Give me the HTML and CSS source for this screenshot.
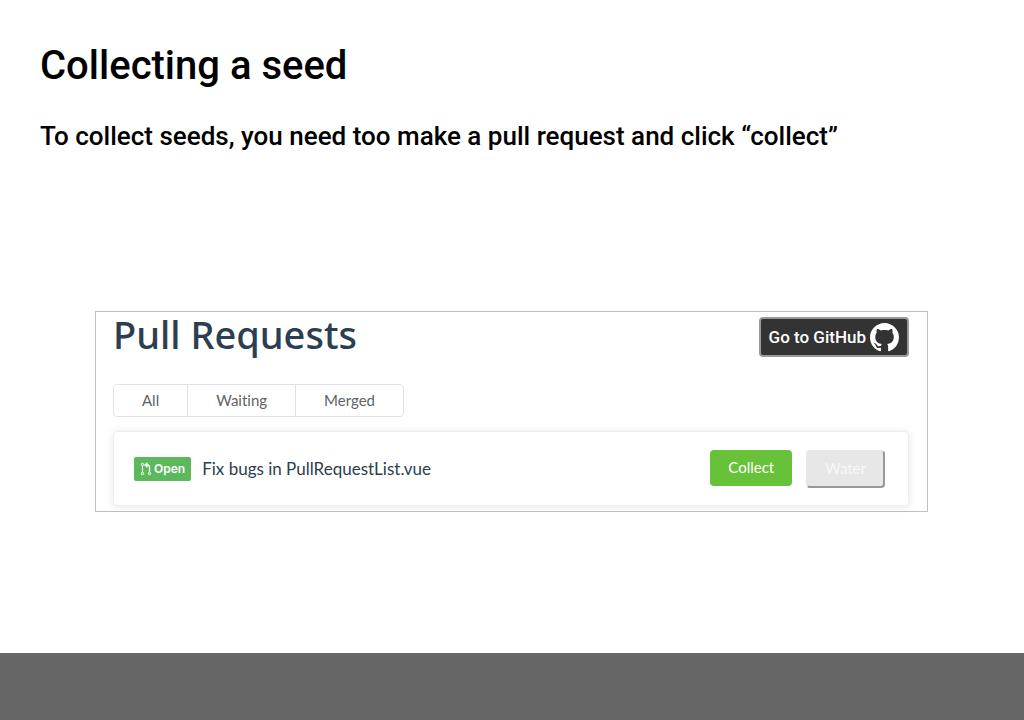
FILE: index.html
```html
<!DOCTYPE html>
<html lang="en">
<head>
<meta charset="utf-8">
<title>Collecting a seed</title>
<link rel="stylesheet" href="styles.css">
</head>
<body>
<main class="slide">
  <h1 class="title">Collecting a seed</h1>
  <p class="lead">To collect seeds, you need too make a pull request and click “collect”</p>
  <section class="panel">
    <header class="panel-head">
      <h2 class="panel-title">Pull Requests</h2>
      <a class="github" href="#">Go to GitHub
        <svg class="github-icon" viewBox="0 0 16 16" aria-hidden="true"><path fill="currentColor" d="M8 0C3.58 0 0 3.58 0 8c0 3.54 2.29 6.53 5.47 7.59.4.07.55-.17.55-.38 0-.19-.01-.82-.01-1.49-2.01.37-2.53-.49-2.69-.94-.09-.23-.48-.94-.82-1.13-.28-.15-.68-.52-.01-.53.63-.01 1.08.58 1.23.82.72 1.21 1.87.87 2.33.66.07-.52.28-.87.51-1.07-1.78-.2-3.64-.89-3.64-3.95 0-.87.31-1.59.82-2.15-.08-.2-.36-1.02.08-2.12 0 0 .67-.21 2.2.82.64-.18 1.32-.27 2-.27s1.36.09 2 .27c1.53-1.04 2.2-.82 2.2-.82.44 1.1.16 1.92.08 2.12.51.56.82 1.27.82 2.15 0 3.07-1.87 3.75-3.65 3.95.29.25.54.73.54 1.48 0 1.07-.01 1.93-.01 2.2 0 .21.15.46.55.38A8.01 8.01 0 0 0 16 8c0-4.42-3.58-8-8-8z"/></svg>
      </a>
    </header>
    <div class="filters">
      <button class="filter" type="button">All</button>
      <button class="filter" type="button">Waiting</button>
      <button class="filter" type="button">Merged</button>
    </div>
    <article class="card">
      <span class="badge">
        <svg class="badge-icon" viewBox="0 0 12 14" aria-hidden="true" fill="none" stroke="currentColor"><circle cx="2.5" cy="2.5" r="1.2"/><circle cx="2.5" cy="11.5" r="1.2"/><circle cx="9.5" cy="11.5" r="1.2"/><path d="M2.5 4v6"/><path stroke-width="1.3" d="M9.5 10V5Q9.5 3 7.5 3H6"/><path fill="currentColor" stroke="none" d="M7.5 0v6L4 3z"/></svg>
        Open
      </span>
      <span class="name">Fix bugs in PullRequestList.vue</span>
      <div class="actions">
        <button class="collect" type="button">Collect</button>
        <button class="water" type="button" disabled>Water</button>
      </div>
    </article>
  </section>
</main>
<footer class="bar"></footer>
</body>
</html>
```
FILE: styles.css
```css
* { box-sizing: border-box; }
body {
  margin: 0;
  min-height: 100vh;
  display: flex;
  flex-direction: column;
  background: #fff;
  color: #000;
  font-family: Roboto, sans-serif;
}
.slide { flex: 1; padding: 40px 40px 0; }
.title { margin: 0; font-size: 40px; line-height: 52px; font-weight: 500; }
.lead { margin: 28px 0 0; font-size: 26px; line-height: 32px; font-weight: 500; }
.panel {
  margin: 159px 56px 0 55px;
  padding: 5px 18px 5px 17px;
  border: 1px solid #c0c0c0;
}
.panel-head { display: flex; justify-content: space-between; align-items: flex-start; }
.panel-title {
  margin: 0;
  font: 500 38px/34px "Noto Sans", sans-serif;
  color: #2c3e50;
}
.github {
  display: flex;
  align-items: center;
  gap: 4px;
  height: 40px;
  padding: 0 8px;
  border: 2px solid #999;
  border-radius: 4px;
  background: #333;
  color: #fff;
  font-size: 17px;
  font-weight: 500;
  text-decoration: none;
}
.github-icon { width: 29px; height: 29px; }
.filters {
  display: inline-flex;
  margin-top: 27px;
  border: 1px solid #e0e2e8;
  border-radius: 4px;
}
.filter {
  height: 31px;
  padding: 0 28px 2px;
  border: 0;
  background: none;
  color: #606266;
  font: 15px Lato, sans-serif;
  font-variant-ligatures: none;
}
.filter + .filter { border-left: 1px solid #e0e2e8; }
.card {
  display: flex;
  align-items: center;
  height: 75px;
  margin-top: 14px;
  padding: 0 23px 0 20px;
  border: 1px solid #ebeef5;
  border-radius: 4px;
  box-shadow: 0 1px 8px rgba(0, 0, 0, 0.1);
}
.badge {
  display: flex;
  align-items: center;
  gap: 2px;
  height: 24px;
  padding: 0 6px;
  border-radius: 2px;
  background: #5cb85c;
  color: #fff;
  font: 600 12px Inter, sans-serif;
}
.badge-icon { width: 12px; height: 14px; }
.name { margin-left: 11px; color: #2c3e50; font: 17px Lato, sans-serif; }
.actions {
  display: flex;
  align-items: flex-start;
  gap: 14px;
  margin-left: auto;
}
.collect, .water {
  border-radius: 4px;
  font: 15px Lato, sans-serif;
}
.collect {
  height: 36px;
  padding: 0 18px 2px;
  border: 0;
  background: #67c23a;
  color: #fff;
}
.water {
  height: 38px;
  padding: 0 17px 2px;
  border: 2px solid #999;
  border-top-color: #e7e7e7;
  border-left-color: #e7e7e7;
  background: #e7e7e7;
  color: #f8f8f8;
}
.bar { height: 67px; background: #666; }
```
